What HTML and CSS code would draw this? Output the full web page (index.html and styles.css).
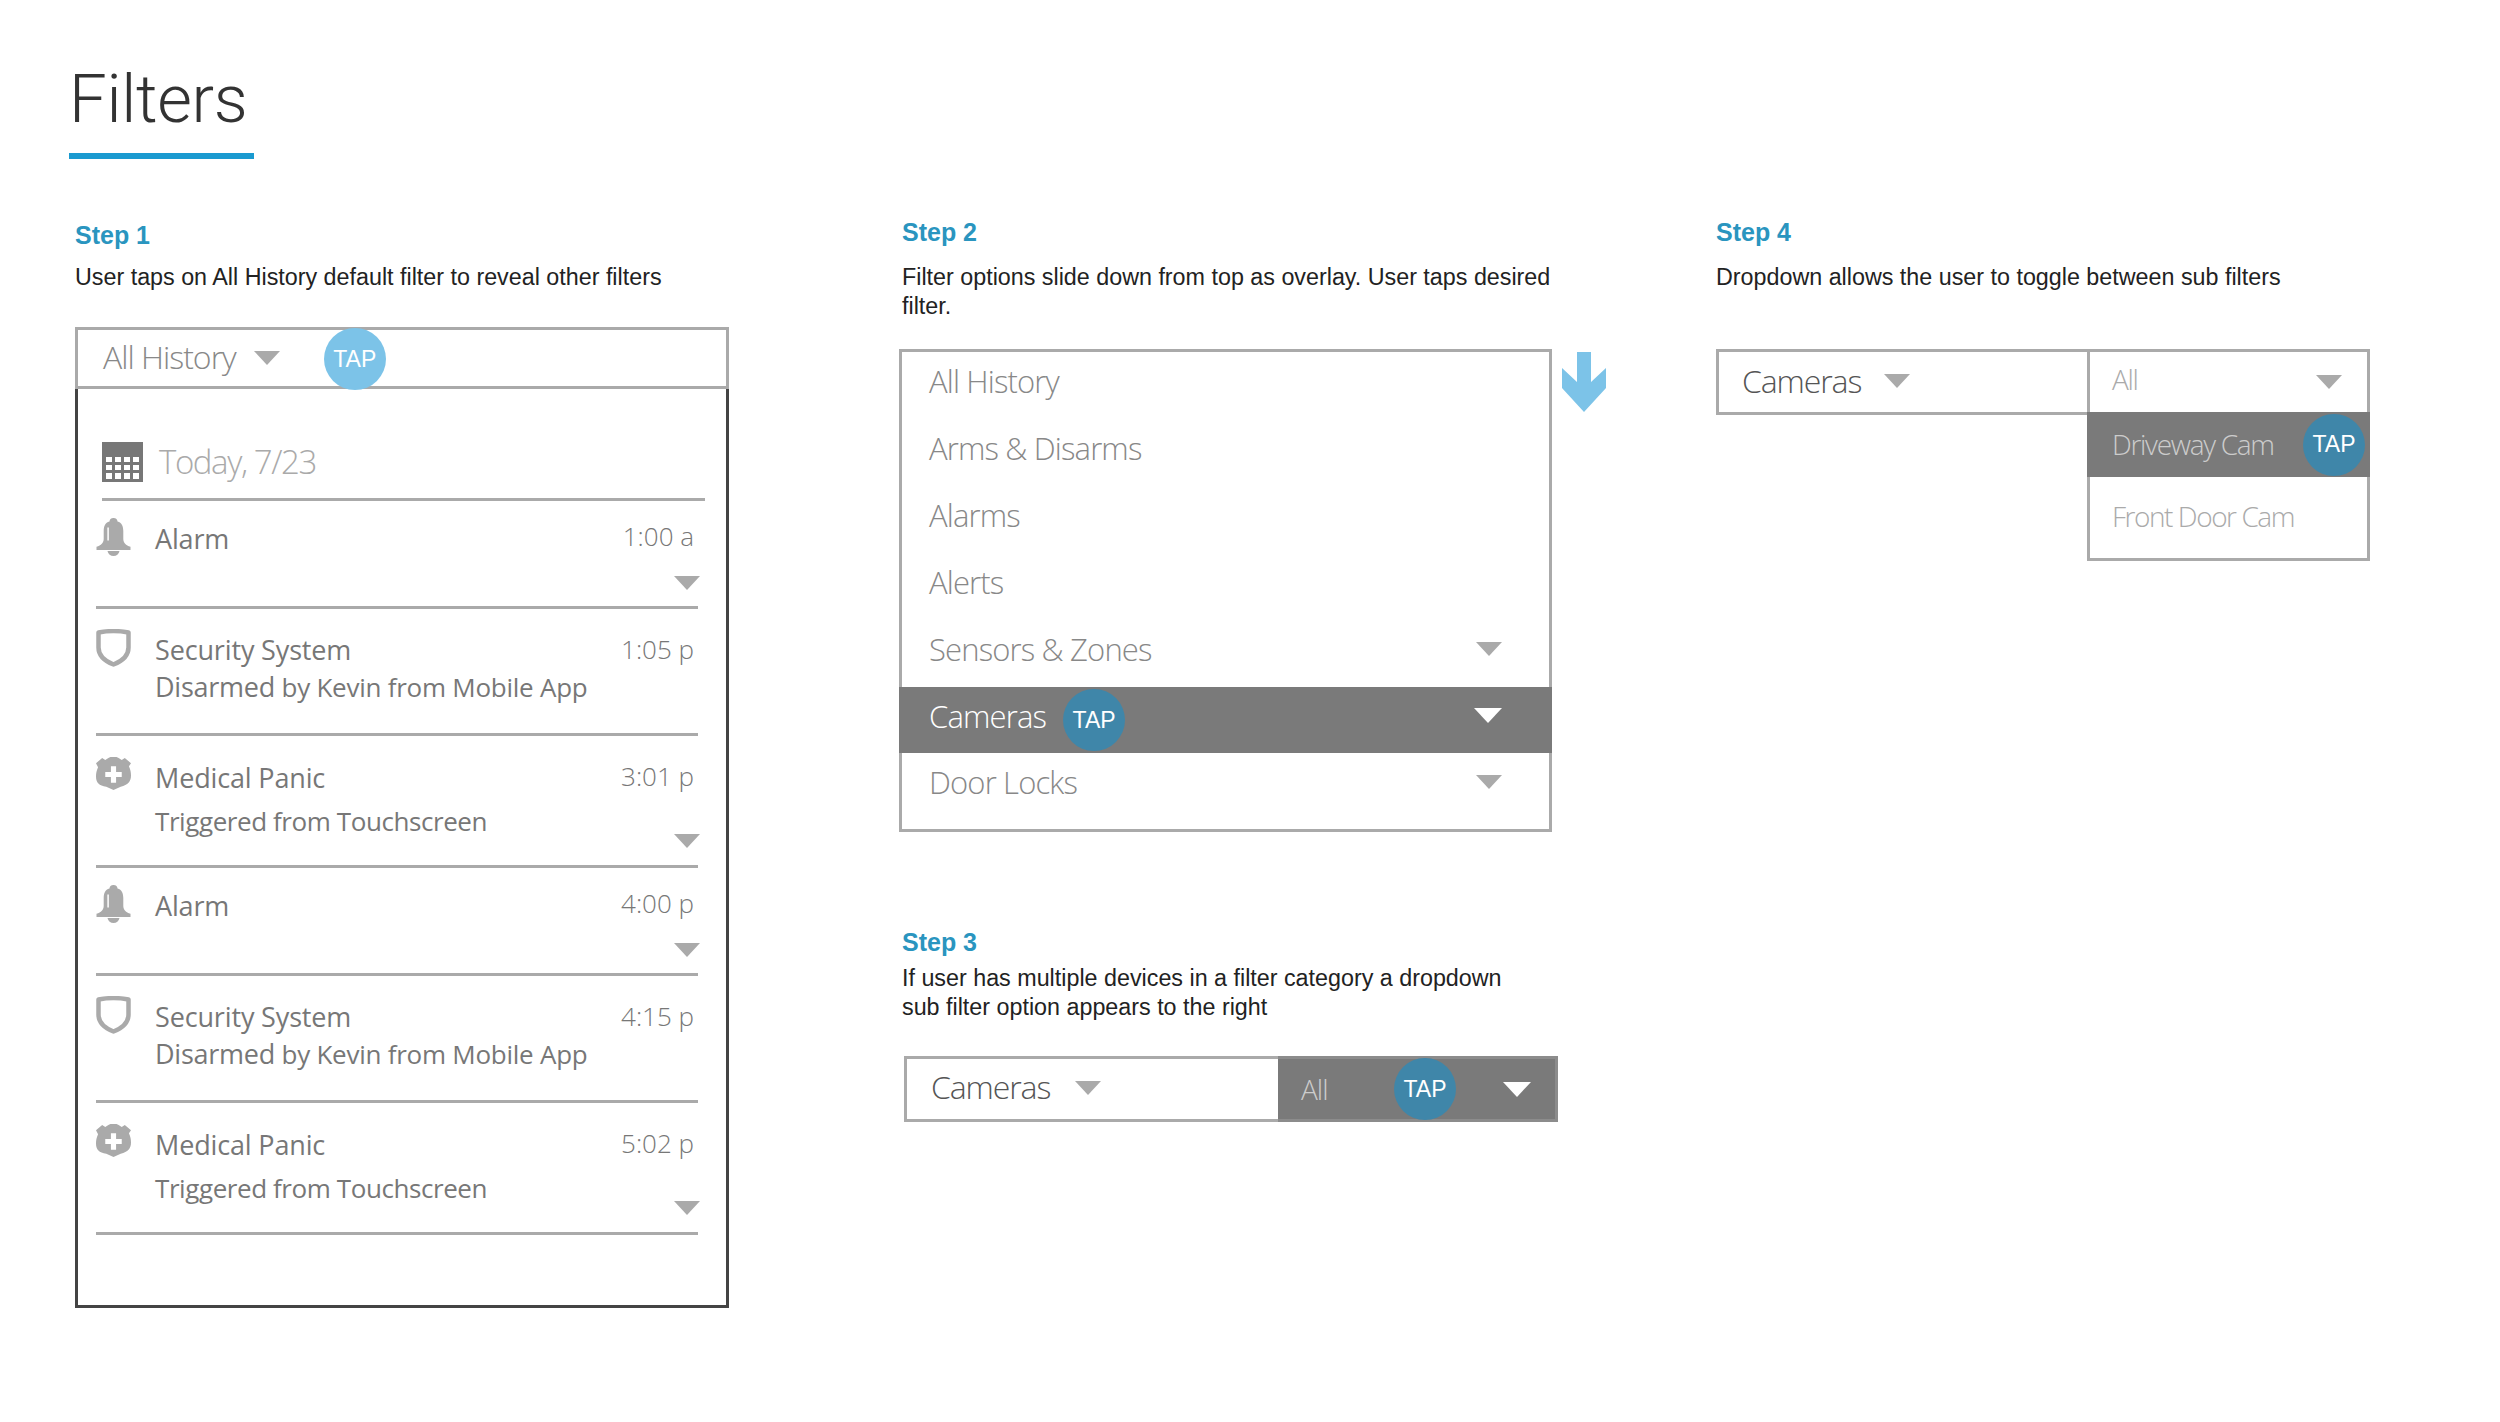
FILE: index.html

```html
<!DOCTYPE html>
<html lang="en">
<head>
    <meta charset="UTF-8">
    <title>Filters</title>
    <link rel="stylesheet" href="styles.css">
</head>
<body>
    <svg class="defs">
        <defs>
            <symbol id="bell" viewBox="0 0 34 38">
                <path d="M17 0c2.600 0 4 1.800 4 3.600 4.400 1.300 5.800 4.800 5.800 9.400v8c0 3.500 2.600 6.400 7.200 7.800v3.200H0v-3.200c4.600-1.400 7.200-4.300 7.200-7.800v-8c0-4.600 1.400-8.100 5.800-9.400C13 1.800 14.400 0 17 0z" fill="#aaa"/>
                <path d="M11 33h12c-.6 3-3 5-6 5s-5.400-2-6-5z" fill="#aaa"/>
                <path d="M11.600 9.500v13" stroke="#fff" stroke-width="1.500" fill="none"/>
            </symbol>
            <symbol id="shield" viewBox="0 0 35 38">
                <path d="M2.500 3.500c9-1.700 21-1.700 30 0v15c0 7.500-6 13.500-15 17-9-3.500-15-9.500-15-17z" fill="none" stroke="#aaa" stroke-width="4.500" stroke-linejoin="round"/>
            </symbol>
            <symbol id="badge" viewBox="0 0 34 34">
                <path d="M6 1l3 2 3-2 2-1h6l2 1 3 2 3-2 6 5-2 3c1.500 3.500 2 6 2 9 0 6-3 9-10 11l-7 3-7-3C3 28 0 25 0 19c0-3 .5-5.500 2-9L0 6z" fill="#aaa"/>
                <path d="M14.500 9h5v5.500H25v5h-5.500V25h-5v-5.500H9v-5h5.500z" fill="#fff"/>
            </symbol>
        </defs>
    </svg>

    <header class="page-head">
        <h1>Filters</h1>
    </header>

    <main class="columns">
        <section class="col col-history">
            <h2 class="step-title">Step 1</h2>
            <p class="step-text">User taps on All History default filter to reveal other filters</p>

            <div class="top-bar">
                <span class="top-label">All History</span>
                <i class="tri tri-grey tri-label"></i>
                <span class="tap tap-light">TAP</span>
            </div>
            <div class="feed">
                <div class="date-row">
                    <div class="calendar">
                        <i></i><i></i><i></i><i></i>
                        <i></i><i></i><i></i><i></i>
                        <i></i><i></i><i></i><i></i>
                    </div>
                    <span class="date-text">Today, 7/23</span>
                </div>

                <div class="event event-alarm">
                    <svg class="ev-icon"><use href="#bell"/></svg>
                    <div class="ev-body"><div class="ev-name">Alarm</div></div>
                    <div class="ev-side"><span class="ev-time">1:00 a</span><i class="tri tri-grey"></i></div>
                </div>
                <div class="event event-security">
                    <svg class="ev-icon"><use href="#shield"/></svg>
                    <div class="ev-body">
                        <div class="ev-name">Security System</div>
                        <div class="ev-sub"><span class="ev-strong">Disarmed</span> by Kevin from Mobile App</div>
                    </div>
                    <div class="ev-side"><span class="ev-time">1:05 p</span></div>
                </div>
                <div class="event event-medical">
                    <svg class="ev-icon"><use href="#badge"/></svg>
                    <div class="ev-body">
                        <div class="ev-name">Medical Panic</div>
                        <div class="ev-sub">Triggered from Touchscreen</div>
                    </div>
                    <div class="ev-side"><span class="ev-time">3:01 p</span><i class="tri tri-grey"></i></div>
                </div>
                <div class="event event-alarm">
                    <svg class="ev-icon"><use href="#bell"/></svg>
                    <div class="ev-body"><div class="ev-name">Alarm</div></div>
                    <div class="ev-side"><span class="ev-time">4:00 p</span><i class="tri tri-grey"></i></div>
                </div>
                <div class="event event-security">
                    <svg class="ev-icon"><use href="#shield"/></svg>
                    <div class="ev-body">
                        <div class="ev-name">Security System</div>
                        <div class="ev-sub"><span class="ev-strong">Disarmed</span> by Kevin from Mobile App</div>
                    </div>
                    <div class="ev-side"><span class="ev-time">4:15 p</span></div>
                </div>
                <div class="event event-medical">
                    <svg class="ev-icon"><use href="#badge"/></svg>
                    <div class="ev-body">
                        <div class="ev-name">Medical Panic</div>
                        <div class="ev-sub">Triggered from Touchscreen</div>
                    </div>
                    <div class="ev-side"><span class="ev-time">5:02 p</span><i class="tri tri-grey"></i></div>
                </div>
            </div>
        </section>

        <section class="col col-options">
            <h2 class="step-title">Step 2</h2>
            <p class="step-text">Filter options slide down from top as overlay. User taps desired filter.</p>

            <div class="options-wrap">
                <ul class="options">
                    <li class="option">All History</li>
                    <li class="option">Arms &amp; Disarms</li>
                    <li class="option">Alarms</li>
                    <li class="option">Alerts</li>
                    <li class="option">Sensors &amp; Zones<i class="tri tri-grey tri-end"></i></li>
                    <li class="option option-on">Cameras<span class="tap tap-dark tap-option">TAP</span><i class="tri tri-white tri-end"></i></li>
                    <li class="option">Door Locks<i class="tri tri-grey tri-end"></i></li>
                </ul>
                <svg class="slide-arrow" viewBox="0 0 44 60">
                    <path d="M15 0h14v30l15-14v20L22 60 0 36V16l15 14z" fill="#7cc3e8"/>
                </svg>
            </div>

            <h2 class="step-title step-three">Step 3</h2>
            <p class="step-text step-text-tight">If user has multiple devices in a filter category a dropdown<br>sub filter option appears to the right</p>

            <div class="sub-bar">
                <div class="sub-left"><span class="sub-name">Cameras</span><i class="tri tri-grey"></i></div>
                <div class="sub-right">
                    <span class="sub-all">All</span>
                    <span class="tap tap-dark tap-sub">TAP</span>
                    <i class="tri tri-white"></i>
                </div>
            </div>
        </section>

        <section class="col col-toggle">
            <h2 class="step-title">Step 4</h2>
            <p class="step-text">Dropdown allows the user to toggle between sub filters</p>

            <div class="toggle">
                <div class="sub-left toggle-left"><span class="sub-name">Cameras</span><i class="tri tri-grey"></i></div>
                <div class="toggle-menu">
                    <div class="menu-row menu-head"><span>All</span><i class="tri tri-grey"></i></div>
                    <div class="menu-row menu-on"><span>Driveway Cam</span><span class="tap tap-dark">TAP</span></div>
                    <div class="menu-row menu-last"><span>Front Door Cam</span></div>
                </div>
            </div>
        </section>
    </main>
</body>
</html>
```

FILE: styles.css

```css
* {
    box-sizing: border-box;
}
body {
    margin: 0;
    background-color: #fff;
    font-family: "Liberation Sans", Arial, sans-serif;
    color: #222;
}
.defs {
    display: none;
}
.page-head {
    padding: 59px 0 0 69px;
}
h1 {
    display: inline-block;
    width: 185px;
    margin: 0;
    height: 100px;
    border-bottom: 6px solid #1a9ad0;
    font-family: Roboto, sans-serif;
    font-weight: 300;
    font-size: 67px;
    letter-spacing: -0.300px;
    line-height: 80px;
    color: #333;
}
.columns {
    display: flex;
    align-items: flex-start;
    padding-top: 57px;
}
.col-history {
    width: 654px;
    margin-left: 75px;
    padding-top: 3px;
}
.col-options {
    width: 710px;
    margin-left: 170px;
}
.col-toggle {
    width: 657px;
    margin-left: 107px;
}
.step-title {
    margin: 0;
    padding-top: 1px;
    height: 30px;
    font-size: 25px;
    line-height: 30px;
    font-weight: bold;
    color: #2a95bf;
}
.step-text {
    margin: 17px 0 0;
    width: 655px;
    font-size: 23.300px;
    line-height: 29px;
    color: #222;
}
.col-history .step-text {
    margin-top: 14px;
    margin-bottom: 35px;
}
.col-options .step-title,
.col-options .step-text {
    margin-left: 3px;
}

/* tap markers and triangles */
.tap {
    display: flex;
    flex: none;
    align-items: center;
    justify-content: center;
    width: 62px;
    height: 62px;
    border-radius: 50%;
    color: #fff;
    font-size: 23px;
}
.tap-light {
    background-color: #7cc3e8;
}
.tap-dark {
    background-color: #3f86a9;
}
.tri {
    display: block;
    flex: none;
    width: 0;
    height: 0;
    border-left: 13px solid transparent;
    border-right: 13px solid transparent;
    border-top: 14px solid #aaa;
}
.tri-white {
    border-left-width: 14px;
    border-right-width: 14px;
    border-top: 15px solid #fff;
}
.tri-end {
    margin-left: auto;
}

/* step 1 */
.top-bar {
    display: flex;
    align-items: center;
    height: 62px;
    padding-left: 25px;
    border: 3px solid #aaa;
}
.top-label {
    margin-top: -4px;
    font-family: "Open Sans", sans-serif;
    font-weight: 300;
    font-size: 32px;
    letter-spacing: -1px;
    color: #888;
}
.tri-label {
    margin-left: 18px;
}
.top-bar .tap {
    margin-left: 44px;
    margin-top: 2px;
}
.feed {
    height: 919px;
    padding-top: 53px;
    border: 3px solid #444;
    border-top: none;
}
.date-row {
    display: flex;
    align-items: center;
    height: 59px;
    margin: 0 21px 0 24px;
    padding-bottom: 17px;
    border-bottom: 3px solid #aaa;
}
.calendar {
    display: grid;
    grid-template-columns: repeat(4, 1fr);
    gap: 3px;
    width: 41px;
    height: 40px;
    padding: 15px 4px 3px;
    background-color: #777;
}
.calendar i {
    background-color: #fff;
}
.date-text {
    margin-left: 16px;
    font-family: "Open Sans", sans-serif;
    font-weight: 300;
    font-size: 33px;
    letter-spacing: -1.400px;
    color: #aaa;
}
.event {
    display: flex;
    margin: 0 28px 0 18px;
    border-bottom: 3px solid #aaa;
    font-family: "Open Sans", sans-serif;
    color: #777;
}
.event-alarm {
    height: 108px;
}
.event-security {
    height: 127px;
}
.event-medical {
    height: 132px;
}
.ev-icon {
    flex: none;
    width: 35px;
    height: 38px;
    margin-right: 24px;
}
.event-alarm .ev-icon {
    margin-top: 17px;
}
.event-security .ev-icon {
    margin-top: 20px;
}
.event-medical .ev-icon {
    width: 35px;
    height: 35px;
    margin-top: 21px;
}
.ev-body {
    flex: 1;
    font-size: 26px;
    line-height: 32px;
    letter-spacing: -0.400px;
}
.event-alarm .ev-body {
    padding-top: 22px;
}
.event-security .ev-body {
    padding-top: 25px;
}
.event-medical .ev-body {
    padding-top: 26px;
}
.ev-name {
    font-size: 27px;
    font-weight: 500;
    letter-spacing: -0.150px;
}
.ev-sub {
    font-weight: 400;
}
.event-security .ev-sub {
    margin-top: 5px;
    letter-spacing: -0.250px;
}
.event-medical .ev-sub {
    margin-top: 11px;
    letter-spacing: -0.420px;
}
.ev-strong {
    font-size: 27px;
    font-weight: 500;
}
.ev-side {
    display: flex;
    flex-direction: column;
    align-items: flex-end;
    justify-content: space-between;
    padding: 19px 0 16px;
}
.ev-side .tri {
    margin-right: -2px;
}
.event-security .ev-side {
    padding-top: 24px;
}
.event-medical .ev-side {
    padding: 24px 0 17px;
}
.ev-time {
    margin-right: 4px;
    font-size: 26px;
    line-height: 32px;
    font-weight: 300;
}

/* step 2 */
.options-wrap {
    display: flex;
    align-items: flex-start;
    margin-top: 28px;
}
.options {
    width: 653px;
    height: 483px;
    margin: 0;
    padding: 0;
    list-style: none;
    border: 3px solid #aaa;
}
.option {
    display: flex;
    align-items: center;
    height: 67px;
    padding: 0 47px 9px 27px;
    font-family: "Open Sans", sans-serif;
    font-weight: 300;
    font-size: 31px;
    letter-spacing: -0.850px;
    color: #888;
}
.option-on {
    height: 66px;
    margin: 0 -3px;
    padding-left: 30px;
    padding-right: 50px;
    background-color: #7a7a7a;
    color: #fff;
}
.tap-option {
    margin: 9px 0 0 17px;
}
.option-on .tap {
    letter-spacing: 0;
    font-family: "Liberation Sans", sans-serif;
    font-weight: 400;
    font-size: 23px;
}
.slide-arrow {
    width: 44px;
    height: 60px;
    margin: 3px 0 0 10px;
}
.step-three {
    margin-top: 94px;
}
.step-text-tight {
    margin-top: 8px;
    line-height: 29px;
}

/* step 3 */
.sub-bar {
    display: flex;
    width: 654px;
    height: 66px;
    margin: 34px 0 0 5px;
}
.sub-left {
    display: flex;
    align-items: center;
    width: 374px;
    padding-left: 24px;
    border: 3px solid #aaa;
    border-right: none;
}
.sub-name {
    margin-top: -5px;
    font-family: "Open Sans", sans-serif;
    font-weight: 300;
    font-size: 32px;
    letter-spacing: -1.100px;
    color: #555;
}
.sub-left .tri {
    margin-left: 25px;
    margin-top: -2px;
}
.sub-right {
    display: flex;
    flex: 1;
    align-items: center;
    padding: 0 24px 0 23px;
    background-color: #7a7a7a;
    border: 3px solid #8c8c8c;
    border-left: none;
}
.sub-all {
    font-family: "Open Sans", sans-serif;
    font-weight: 300;
    font-size: 28px;
    letter-spacing: -1px;
    color: #ccc;
}
.tap-sub {
    margin-left: auto;
}
.sub-right .tri {
    margin-left: 47px;
}

/* step 4 */
.toggle {
    display: flex;
    align-items: flex-start;
    margin-top: 57px;
}
.toggle-left {
    height: 66px;
    padding-left: 23px;
    border-right: 3px solid #aaa;
}
.toggle-left .sub-name {
    margin-top: -4px;
}
.toggle-left .tri {
    margin-left: 23px;
}
.toggle-menu {
    width: 283px;
    height: 212px;
    margin-left: -3px;
    border: 3px solid #aaa;
}
.menu-row {
    display: flex;
    align-items: center;
    justify-content: space-between;
    height: 72px;
    padding: 0 25px 0 22px;
    font-family: "Open Sans", sans-serif;
    font-weight: 300;
    font-size: 28px;
    letter-spacing: -1.300px;
    color: #aaa;
}
.menu-head {
    height: 60px;
    padding-bottom: 6px;
}
.menu-head .tri {
    margin-top: 6px;
}
.menu-on {
    height: 65px;
    margin: 0 -3px;
    padding: 0 5px 2px 25px;
    background-color: #7a7a7a;
    color: #ccc;
}
.menu-on .tap {
    margin-top: 2px;
    letter-spacing: 0;
    font-family: "Liberation Sans", sans-serif;
    font-weight: 400;
    font-size: 23px;
}
.menu-last {
    padding-top: 6px;
    letter-spacing: -1.450px;
}
```
